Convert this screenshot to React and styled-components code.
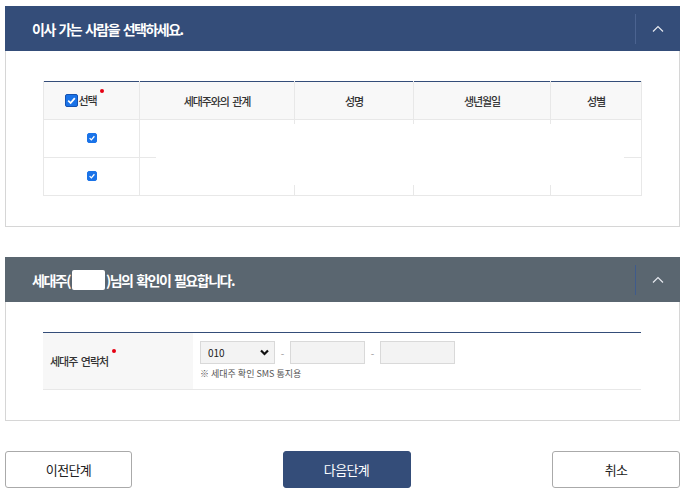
import React from "react";
import styled, { createGlobalStyle } from "styled-components";

const Global = createGlobalStyle`
  html, body { margin: 0; padding: 0; background: #fff; }
  body { font-family: "Noto Sans CJK KR", "Noto Sans", sans-serif; color: #333; }
  * { box-sizing: border-box; }
`;

const Page = styled.div`
  width: 686px;
  padding: 6px 6px 0 5px;
  display: flex;
  flex-direction: column;
  gap: 30px;
`;

const Panel = styled.section`
  display: flex;
  flex-direction: column;
`;

const PanelHeader = styled.div`
  height: 45px;
  background: ${(p) => p.$bg};
  display: flex;
  align-items: center;
  padding-left: 27px;
  color: #fff;
`;

const Title = styled.h2`
  margin: 0;
  flex: 1;
  font-size: 14px;
  font-weight: 700;
  letter-spacing: -1.5px;
  word-spacing: 2px;
  line-height: 20px;
  display: flex;
  align-items: center;
  white-space: pre;
`;

const NameMask = styled.span`
  display: inline-block;
  width: 33px;
  height: 20px;
  background: #fff;
  border-radius: 2px;
  margin: 0 1px 0 2px;
`;

const Toggle = styled.div`
  width: 45px;
  height: 30px;
  border-left: 1px solid ${(p) => p.$line};
  display: flex;
  align-items: center;
  justify-content: center;
`;

const PanelBody = styled.div`
  border: 1px solid #d6d6d6;
  border-top: none;
  padding: 30px 38px ${(p) => p.$pb || 30}px 37px;
`;

const TableWrap = styled.div`
  position: relative;
`;

const Table = styled.table`
  width: 598px;
  border-collapse: collapse;
  table-layout: fixed;
  border-top: 1px solid #344d79;
  font-size: 11px;
  letter-spacing: -1.1px;
  word-spacing: 2px;
`;

const Th = styled.th`
  height: 38px;
  background: #f8f8f8;
  font-weight: 500;
  color: #333;
  border-left: 1px solid #e8e8e8;
  border-right: 1px solid #e8e8e8;
  padding: 0;
  text-align: center;
`;

const Td = styled.td`
  height: 38px;
  border: 1px solid #e8e8e8;
  padding: 0;
  text-align: center;
`;

const CellCenter = styled.div`
  display: flex;
  align-items: center;
  justify-content: center;
  margin-top: -2px;
`;

const Mask = styled.div`
  position: absolute;
  left: 113px;
  top: 43px;
  width: 468px;
  height: 61px;
  background: #fff;
`;

const SelectHead = styled.span`
  display: inline-flex;
  align-items: center;
  position: relative;
  left: -7px;
`;

const Box = styled.span`
  display: inline-flex;
  align-items: center;
  justify-content: center;
  width: ${(p) => p.$size}px;
  height: ${(p) => p.$size}px;
  background: #1a73e8;
  border: 1px solid ${(p) => (p.$dark ? "#1652b0" : "#1a73e8")};
  border-radius: 2px;
`;

const Required = styled.span`
  display: inline-block;
  width: 4px;
  height: 4px;
  border-radius: 50%;
  background: #e60012;
  align-self: flex-start;
  margin-left: ${(p) => p.$ml || 4}px;
  margin-top: ${(p) => p.$mt || 0}px;
`;

const FormTable = styled.div`
  display: flex;
  width: 598px;
  border-top: 1px solid #344d79;
  border-bottom: 1px solid #e8e8e8;
`;

const Label = styled.div`
  width: 150px;
  height: 56px;
  background: #f7f7f7;
  display: flex;
  align-items: center;
  padding-left: 7px;
  font-size: 11px;
  font-weight: 500;
  letter-spacing: -1px;
  word-spacing: 2px;
  color: #333;
`;

const LabelText = styled.span`
  display: inline-flex;
  align-items: flex-start;
  white-space: pre;
`;

const Value = styled.div`
  flex: 1;
  padding: 8px 7px;
  display: flex;
  flex-direction: column;
  gap: 4px;
`;

const InputRow = styled.div`
  display: flex;
  align-items: center;
`;

const Select = styled.div`
  width: 75px;
  height: 23px;
  background: #f3f3f3;
  border: 1px solid #d9d9d9;
  display: flex;
  align-items: center;
  justify-content: space-between;
  padding: 0 5px 0 7px;
  font-size: 10px;
  color: #222;
`;

const Dash = styled.span`
  width: 15px;
  text-align: center;
  font-size: 10px;
  color: #999;
`;

const Input = styled.div`
  width: 75px;
  height: 23px;
  background: #f3f3f3;
  border: 1px solid #d9d9d9;
`;

const Note = styled.p`
  margin: 0;
  font-size: 9px;
  line-height: 12px;
  color: #555;
  letter-spacing: 0;
`;

const ButtonRow = styled.div`
  display: flex;
  justify-content: space-between;
`;

const Button = styled.button`
  width: ${(p) => p.$w || 128}px;
  height: 37px;
  border-radius: 3px;
  border: 1px solid ${(p) => (p.$primary ? "#344d79" : "#aaaaaa")};
  background: ${(p) => (p.$primary ? "#344d79" : "#fff")};
  color: ${(p) => (p.$primary ? "#fff" : "#222")};
  font-family: inherit;
  font-size: 13px;
  letter-spacing: -0.6px;
  margin-left: ${(p) => p.$ml || 0}px;
  padding: 0;
`;

const Chevron = () => (
  <svg width="12" height="8" viewBox="0 0 12 8">
    <polyline points="1,6.5 6,1.5 11,6.5" fill="none" stroke="#e6e9ef" strokeWidth="1.2" />
  </svg>
);

const Check = ({ size }) => (
  <svg width={size} height={size} viewBox="0 0 10 10">
    <polyline points="2,5.2 4.2,7.3 8,2.8" fill="none" stroke="#fff" strokeWidth="1.6" />
  </svg>
);

const CheckBox = ({ size = 10, dark }) => (
  <Box $size={size} $dark={dark}>
    <Check size={size - 2} />
  </Box>
);

const DownArrow = () => (
  <svg width="9" height="7" viewBox="0 0 9 7">
    <polyline points="1,1.5 4.5,5 8,1.5" fill="none" stroke="#111" strokeWidth="2.2" />
  </svg>
);

export default function App() {
  const rows = [0, 1];
  return (
    <>
      <Global />
      <Page>
        <Panel>
          <PanelHeader $bg="#344d79">
            <Title>이사 가는 사람을 선택하세요.</Title>
            <Toggle $line="#4b6390">
              <Chevron />
            </Toggle>
          </PanelHeader>
          <PanelBody>
            <TableWrap>
              <Table>
                <colgroup>
                  <col style={{ width: 96 }} />
                  <col style={{ width: 155 }} />
                  <col style={{ width: 119 }} />
                  <col style={{ width: 137 }} />
                  <col style={{ width: 91 }} />
                </colgroup>
                <thead>
                  <tr>
                    <Th>
                      <SelectHead>
                        <CheckBox size={13} dark />
                        <span>선택</span>
                        <Required $ml={3} $mt={-3} />
                      </SelectHead>
                    </Th>
                    <Th>세대주와의 관계</Th>
                    <Th>성명</Th>
                    <Th>생년월일</Th>
                    <Th>성별</Th>
                  </tr>
                </thead>
                <tbody>
                  {rows.map((r) => (
                    <tr key={r}>
                      <Td>
                        <CellCenter>
                          <CheckBox size={10} />
                        </CellCenter>
                      </Td>
                      <Td />
                      <Td />
                      <Td />
                      <Td />
                    </tr>
                  ))}
                </tbody>
              </Table>
              <Mask />
            </TableWrap>
          </PanelBody>
        </Panel>

        <Panel>
          <PanelHeader $bg="#5a6670">
            <Title>
              세대주(<NameMask />)님의 확인이 필요합니다.
            </Title>
            <Toggle $line="#3f5b8c">
              <Chevron />
            </Toggle>
          </PanelHeader>
          <PanelBody>
            <FormTable>
              <Label>
                <LabelText>
                  세대주 연락처
                  <Required $ml={4} $mt={-4} />
                </LabelText>
              </Label>
              <Value>
                <InputRow>
                  <Select>
                    <span>010</span>
                    <DownArrow />
                  </Select>
                  <Dash>-</Dash>
                  <Input />
                  <Dash>-</Dash>
                  <Input />
                </InputRow>
                <Note>※ 세대주 확인 SMS 통지용</Note>
              </Value>
            </FormTable>
          </PanelBody>
        </Panel>

        <ButtonRow>
          <Button $w={127}>이전단계</Button>
          <Button $primary $ml={9}>다음단계</Button>
          <Button>취소</Button>
        </ButtonRow>
      </Page>
    </>
  );
}
